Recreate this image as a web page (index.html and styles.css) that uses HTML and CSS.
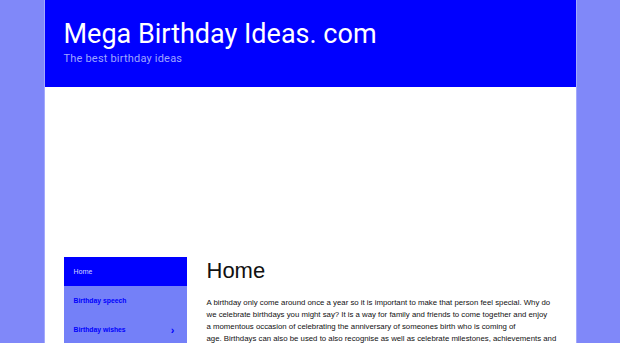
FILE: index.html
```html
<!DOCTYPE html>
<html>
<head>
    <title>Mega Birthday Ideas. com</title>
    <link rel="stylesheet" href="styles.css">
</head>
<body>

<div class="page">
    <header class="site-header">
        <h1 class="site-title">Mega Birthday Ideas. com</h1>
        <div class="tagline">The best birthday ideas</div>
    </header>

    <div class="ad-space"></div>

    <div class="content">
        <nav class="sidebar">
            <a class="nav-item active" href="#">Home</a>
            <a class="nav-item" href="#">Birthday speech</a>
            <a class="nav-item" href="#">Birthday wishes <span class="arrow">&rsaquo;</span></a>
        </nav>
        <main class="main">
            <h2 class="page-title">Home</h2>
            <p class="intro">A birthday only come around once a year so it is important to make that person feel special. Why do we celebrate birthdays you might say? It is a way for family and friends to come together and enjoy<br>a momentous occasion of celebrating the anniversary of someones birth who is coming of<br>age. Birthdays can also be used to also recognise as well as celebrate milestones, achievements and</p>
        </main>
    </div>
</div>

</body>
</html>
```

FILE: styles.css
```css
body {
    margin: 0;
    padding: 0;
    background-color: #8088f9;
    font-family: Arial, "Liberation Sans", sans-serif;
}
.page {
    width: 533px;
    margin: 0 auto;
    background: white;
    border-left: 1px solid #a3a9fb;
    border-right: 1px solid #a3a9fb;
    box-sizing: border-box;
    min-height: 343px;
    overflow: hidden;
}
.site-header {
    background-color: #0000ff;
    color: white;
    height: 87px;
    padding: 0 19px;
    box-sizing: border-box;
    font-family: Roboto, sans-serif;
}
.site-title {
    margin: 0;
    padding-top: 17px;
    font-size: 27px;
    font-weight: normal;
    line-height: 34px;
}
.tagline {
    font-size: 11px;
    color: #9fa5ff;
    margin-top: 1px;
    letter-spacing: 0.2px;
}
.ad-space {
    height: 170px;
}
.content {
    display: flex;
    padding: 0 19px;
    gap: 20px;
}
.sidebar {
    width: 123px;
    flex: none;
    background: #7480f8;
}
.nav-item {
    display: flex;
    justify-content: space-between;
    align-items: center;
    height: 29px;
    padding: 0 12px 0 10px;
    font-size: 6.8px;
    font-weight: bold;
    color: #0000ff;
    text-decoration: none;
}
.nav-item.active {
    background: #0000ff;
    color: #d0d4ff;
    font-weight: normal;
    font-family: Roboto, sans-serif;
    font-size: 7px;
}
.arrow {
    font-size: 11px;
}
.main {
    flex: 1;
}
.page-title {
    margin: 0;
    padding-top: 1px;
    font-size: 22px;
    font-weight: normal;
    color: #111;
    line-height: 26px;
}
.intro {
    margin: 13px 0 0;
    font-size: 7.8px;
    line-height: 12px;
    color: #111;
}
```
